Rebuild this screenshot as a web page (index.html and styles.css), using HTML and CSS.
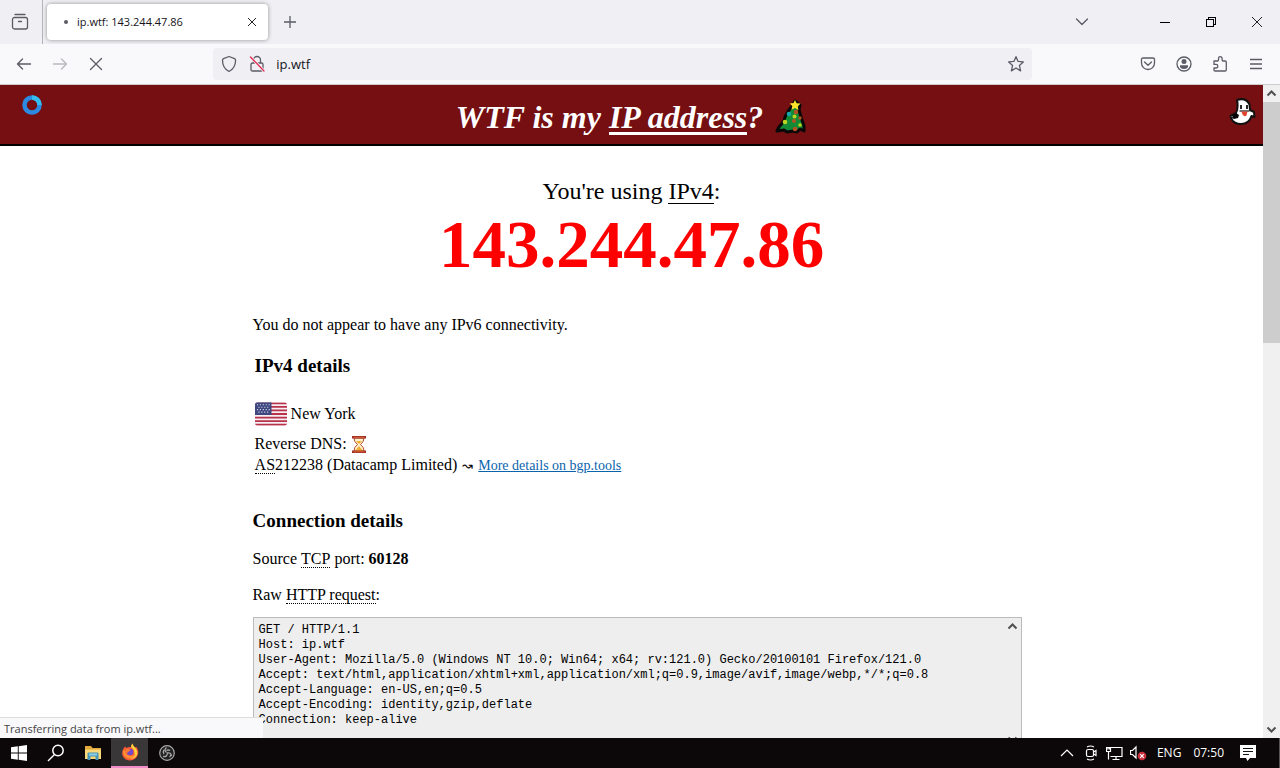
FILE: index.html
```html
<!DOCTYPE html>
<html lang="en">
<head>
<meta charset="utf-8">
<title>ip.wtf: 143.244.47.86</title>
<link rel="stylesheet" href="styles.css">
</head>
<body class="desktop">
<div class="tabstrip">
  <button class="view-btn" aria-label="Firefox View"><svg width="18" height="18" viewBox="0 0 18 18" class="line"><path d="M4 1.500h10M3.500 4.500h11a2 2 0 0 1 2 2v7.500a2 2 0 0 1-2 2h-11a2 2 0 0 1-2-2V6.500a2 2 0 0 1 2-2zM7.500 8.500h3" /></svg></button>
  <div class="tab">
    <span class="tab-dot"></span>
    <span class="tab-title">ip.wtf: 143.244.47.86</span>
    <button class="icon-btn" aria-label="Close tab"><svg width="10" height="10" viewBox="0 0 10 10" class="dark"><path d="M1 1l8 8M9 1L1 9"/></svg></button>
  </div>
  <button class="icon-btn new-tab" aria-label="New tab"><svg width="12" height="12" viewBox="0 0 12 12" class="line"><path d="M6 0v12M0 6h12"/></svg></button>
  <div class="window-controls">
    <button class="icon-btn list-tabs" aria-label="List all tabs"><svg width="14" height="8" viewBox="0 0 14 8" class="line"><path d="M1.500 1L7 6.500 12.500 1"/></svg></button>
    <button class="win-btn" aria-label="Minimize"><svg width="10" height="10" viewBox="0 0 10 10" class="crisp"><path d="M0 5.500h10"/></svg></button>
    <button class="win-btn" aria-label="Restore"><svg width="10" height="10" viewBox="0 0 10 10" class="crisp"><path d="M.5 2.500h7v7h-7zM2.500 2.500v-2h7v7h-2"/></svg></button>
    <button class="win-btn" aria-label="Close"><svg width="10" height="10" viewBox="0 0 10 10" class="dark"><path d="M0 0l10 10M10 0L0 10"/></svg></button>
  </div>
</div>
<div class="toolbar">
  <div class="nav">
    <button class="icon-btn" aria-label="Back"><svg width="16" height="14" viewBox="0 0 16 14" class="line"><path d="M14.500 7H1.500M6.500 2L1.500 7l5 5"/></svg></button>
    <button class="icon-btn faded" aria-label="Forward" disabled><svg width="16" height="14" viewBox="0 0 16 14" class="line"><path d="M1.500 7h13M9.500 2l5 5-5 5"/></svg></button>
    <button class="icon-btn" aria-label="Stop"><svg width="14" height="14" viewBox="0 0 14 14" class="line"><path d="M1.500 1.500l11 11M12.500 1.500l-11 11"/></svg></button>
  </div>
  <div class="urlbar">
    <button class="url-icon" aria-label="Tracking protection"><svg width="16" height="18" viewBox="0 0 16 18" class="line"><path d="M8 1.500l5.600 2.200q1 .5 1 1.600C14.500 10.500 12 14.500 8 16.500 4 14.500 1.500 10.500 1.500 5.300q0-1.100 1-1.600z"/></svg></button>
    <button class="url-icon" aria-label="Connection not secure"><svg width="16" height="18" viewBox="0 0 16 18" class="line"><path d="M4.500 8V5a3.500 3.500 0 0 1 7 0v3M3.500 8h9q1.500 0 1.500 1.500v5q0 1.500-1.500 1.500h-9Q2 16 2 14.500v-5Q2 8 3.500 8z"/><path d="M1.500 2l13.500 14" stroke="#f4eff4" stroke-width="3"/><path d="M1.500 2l13.500 14" stroke="#e22850" stroke-width="1.300"/></svg></button>
    <input class="url-text" aria-label="Address" value="ip.wtf">
    <button class="url-icon" aria-label="Bookmark"><svg width="18" height="18" viewBox="0 0 18 18" class="line"><path d="M9 1.700l2.100 4.700 5.200.5-3.900 3.500 1.200 5.500L9 13l-4.600 2.900 1.200-5.500-3.900-3.500 5.200-.5z"/></svg></button>
  </div>
  <div class="actions">
    <button class="icon-btn" aria-label="Pocket"><svg width="16" height="14" viewBox="0 0 16 14" class="line"><path d="M3 1h10q1.500 0 1.500 1.500V6a6.500 6.500 0 0 1-13 0V2.500Q1.500 1 3 1zM4.500 5L8 8.300 11.500 5"/></svg></button>
    <button class="icon-btn" aria-label="Account"><svg width="16" height="16" viewBox="0 0 16 16" class="line"><circle cx="8" cy="8" r="7"/><circle cx="8" cy="5.500" r="2.500" fill="#5b5b66" stroke="none"/><path d="M4 9.200h8q.5 3.800-4 3.800t-4-3.800z" fill="#5b5b66" stroke="none"/></svg></button>
    <button class="icon-btn" aria-label="Extensions"><svg width="16" height="18" viewBox="0 0 16 18" class="line"><path d="M2 6h3.500q1 0 1-1V3.500a1.800 1.800 0 0 1 3.600 0V5q0 1 1 1h2q1.200 0 1.200 1.200v7.600q0 1.200-1.200 1.200H3.200Q2 16 2 14.800V13h2a1.800 1.800 0 0 0 0-3.600H2z"/></svg></button>
    <button class="icon-btn" aria-label="Menu"><svg width="12" height="12" viewBox="0 0 12 12" class="line"><path d="M0 1.500h12M0 6h12M0 10.500h12"/></svg></button>
  </div>
</div>
<div class="viewport">
  <div class="page">
    <header class="banner">
      <h1 class="banner-title">WTF is my <span class="banner-key">IP address</span>?</h1>
      <svg class="tree" width="34" height="38" viewBox="0 0 34 38"><path d="M22 3l5 4-1 5 2 7 3 9v5l-4-2-3 3-4-1-6 1-3-2-7 1 2-4 5-6 1-4 4-7 4-5z" fill="#138a35" stroke="#080808" stroke-width="3" stroke-linejoin="round"/><path d="M22 2l1.600 3.200 4 .3-2.800 2.700.6 3.800-3.400-2-3.500 1.800.8-3.800-2.600-2.500 3.800-.5z" fill="#ffe22c"/><g fill="#b45322"><circle cx="23" cy="14" r="2.200"/><circle cx="21" cy="23" r="2"/><circle cx="27" cy="20" r="1.700"/><circle cx="22" cy="31" r="2.300"/></g><g fill="#b9d522"><circle cx="21.500" cy="18.500" r="2"/><circle cx="12" cy="24" r="2.300"/><circle cx="27" cy="27" r="1.800"/></g><circle cx="16" cy="16" r="2.300" fill="#18a6a6"/></svg>
      <svg class="ghost" width="28" height="30" viewBox="0 0 28 30"><path d="M9.500 6L9 3q9-3 12.500 4.500L22 13l4 2 .5 5-3-1Q21 27 13 27q-7 0-9.500-5l-1-3L8 16q2-3 1.500-10z" fill="#fff" stroke="#111" stroke-width="2" stroke-linejoin="round"/><path d="M5 18l3-2 3 2-1 3-4 1-2-1z" fill="#050505"/><path d="M13 8v4M19 8v4" stroke="#111" stroke-width="1.800"/><path d="M11.500 14h10" stroke="#111" stroke-width="1.200"/><path d="M13.500 14.500h6l-1 4q-2 2-4-1z" fill="#e3442d"/></svg>
    </header>
    <main class="main">
      <div class="address">
        <p class="using">You're using <span class="using-key">IPv4</span>:</p>
        <p class="ip">143.244.47.86</p>
      </div>
      <p class="no-v6">You do not appear to have any IPv6 connectivity.</p>
      <section class="details">
        <h2 class="heading">IPv4 details</h2>
        <p class="place"><svg width="32" height="24" viewBox="0 0 33 24"><clipPath id="flag-shape"><rect width="33" height="24" rx="3"/></clipPath><g clip-path="url(#flag-shape)"><path fill="#f6eef0" d="M0 0h33v24H0z"/><path d="M0 1h33M0 4.670h33M0 8.330h33M0 12h33M0 15.670h33M0 19.330h33M0 23h33" stroke="#b8324b" stroke-width="1.900"/><path fill="#3f4780" d="M0 0h17v13H0z"/><path d="M2 2.500h14M3.500 5h12M2 7.500h14M3.500 10h12" stroke="#d4d6e8" stroke-width="1.200" stroke-dasharray="1.200 1.800"/></g></svg> New York</p>
        <p class="dns">Reverse DNS: <svg width="14" height="17" viewBox="0 0 14 17"><path d="M2 2h10q0 4-3.500 6.500Q12 11 12 15H2q0-4 3.500-6.500Q2 6 2 2z" fill="#fdf3cf" stroke="#b04a25"/><path d="M4 5h6L7 8zM7 10l4 5H3z" fill="#f0ad32"/><path d="M0 0h14v2.500H0zM0 14.500h14V17H0z" fill="#9c2f22"/><path d="M1.500 1.300h11M1.500 15.800h11" stroke="#e96c42" stroke-width=".8"/></svg></p>
        <p class="asn"><abbr>AS</abbr>212238 (Datacamp Limited) <span class="squiggle">↝</span> <a class="link" href="#bgp">More details on bgp.tools</a></p>
      </section>
      <h2 class="heading">Connection details</h2>
      <p class="port">Source <abbr>TCP</abbr> port: <b>60128</b></p>
      <p class="raw">Raw <abbr>HTTP request</abbr>:</p>
      <div class="request">
        <pre class="request-text">GET / HTTP/1.1
Host: ip.wtf
User-Agent: Mozilla/5.0 (Windows NT 10.0; Win64; x64; rv:121.0) Gecko/20100101 Firefox/121.0
Accept: text/html,application/xhtml+xml,application/xml;q=0.9,image/avif,image/webp,*/*;q=0.8
Accept-Language: en-US,en;q=0.5
Accept-Encoding: identity,gzip,deflate
Connection: keep-alive

</pre>
        <div class="request-scroll">
          <svg width="17" height="17" viewBox="0 0 17 17" class="arrow"><path d="M4.500 10.500l4-4 4 4"/></svg>
          <svg width="17" height="17" viewBox="0 0 17 17" class="arrow"><path d="M4.500 6.500l4 4 4-4"/></svg>
        </div>
      </div>
    </main>
    <svg class="busy" width="20" height="20" viewBox="0 0 20 20"><circle cx="10" cy="10" r="7.500" fill="none" stroke="#2c8be0" stroke-width="4.500"/><path d="M10 2.500a7.500 7.500 0 0 1 7.500 7.500" fill="none" stroke="#35bdf0" stroke-width="4.500"/></svg>
    <div class="status">Transferring data from ip.wtf...</div>
  </div>
  <div class="scrollbar">
    <svg width="17" height="17" viewBox="0 0 17 17" class="arrow"><path d="M4.500 10.500l4-4 4 4"/></svg>
    <div class="track"><div class="thumb"></div></div>
    <svg width="17" height="17" viewBox="0 0 17 17" class="arrow"><path d="M4.500 6.500l4 4 4-4"/></svg>
  </div>
</div>
<div class="taskbar">
  <button class="task" aria-label="Start"><svg width="16" height="16" viewBox="0 0 16 16"><path d="M0 2.300L6.800 1.300V7.500H0zM7.700 1.200L16 0v7.500H7.700zM0 8.500h6.800v6.200L0 13.700zM7.700 8.500H16V16l-8.300-1.200z" fill="#fff"/></svg></button>
  <button class="task" aria-label="Search"><svg width="18" height="18" viewBox="0 0 18 18" fill="none" stroke="#fff" stroke-width="1.500"><circle cx="11" cy="6.500" r="5.200"/><path d="M7.500 10.500L1 17"/></svg></button>
  <button class="task" aria-label="File Explorer"><svg width="18" height="16" viewBox="0 0 18 16"><path d="M1 1h6l1.500 2H17v11H1z" fill="#e0a93a"/><path d="M1 4.500h16V14H1z" fill="#fbd775"/><path d="M3.500 15V8.500q0-1 1-1h9q1 0 1 1V15h-3v-3.500h-5V15z" fill="#4795b8"/><path d="M5 8.500h8v2H5z" fill="#8ed0e6"/></svg></button>
  <button class="task active" aria-label="Firefox"><svg width="18" height="18" viewBox="0 0 18 18"><path d="M4 3.500L5.500 5q2-1.500 4.500-1 0-2 1.500-3.500Q12 3 14 4.500l1.500-.5Q18 8 17 11.500 15 17 9 17.500 3 17 1.300 12 .5 7.500 4 3.500z" fill="#ff5a36"/><path d="M11.500.5Q12 3 14.500 5q3 4 1 8-2.500 3.500-6.500 3 5-2 4.500-6T10 4q0-2 1.500-3.500z" fill="#ffd43b"/><path d="M2 8q0 7 7 7.500 5-.5 5.500-5-3 3.500-7 2Q4 11 4 7z" fill="#ff9330"/><circle cx="9" cy="9" r="3.300" fill="#7548c8"/><path d="M4.500 6.500Q7 5 9.500 7L8 8.500q-2 0-1.500 2-2.500-1-2-4z" fill="#ff7a33"/></svg></button>
  <button class="task" aria-label="OBS Studio"><svg width="16" height="16" viewBox="0 0 16 16" fill="none" stroke="#a9a9a9"><circle cx="8" cy="8" r="7.300" fill="#222" stroke-width="1.200"/><path d="M7.500 2.500q-3 2.500 0 5M12.500 11q-.5-4-4.500-3M4 11.500q4 1 4.500-3.500M5 5q-1.500 2 0 4M11 5.500q-2-1-3.500 0M10.500 12q1.500-1 1-2.500" stroke-width="1.300"/></svg></button>
  <div class="tray">
    <button class="tray-btn" aria-label="Show hidden icons"><svg width="14" height="8" viewBox="0 0 14 8" class="light"><path d="M1 7l6-6 6 6"/></svg></button>
    <button class="tray-btn" aria-label="Meet Now"><svg width="12" height="16" viewBox="0 0 12 16" class="light"><rect x="1.500" y="4.500" width="7" height="7" rx="1.500"/><path d="M8.500 7l2.500-1.500v5L8.500 9M2 2q3.500-2 7 0M2 14q3.500 2 7 0"/></svg></button>
    <button class="tray-btn" aria-label="Network"><svg width="17" height="15" viewBox="0 0 17 15" class="light"><path d="M5 1.500h11v9H4.500M.5 1.500h4v4h-4zM2.500 5.500v8M10 10.500v3M6.500 13.500h7M2 1.500v2M3.500 1.500v2"/></svg></button>
    <button class="tray-btn" aria-label="Volume muted"><svg width="17" height="16" viewBox="0 0 17 16" class="light"><path d="M.5 5.500h2L6 2v11L2.500 9.500h-2z"/><circle cx="12" cy="11" r="4.300" fill="#c8303c" stroke="none"/><path d="M10.200 9.200l3.600 3.600M13.800 9.200l-3.600 3.600"/></svg></button>
    <span class="lang">ENG</span>
    <span class="clock">07:50</span>
    <button class="tray-btn" aria-label="Notifications"><svg width="16" height="16" viewBox="0 0 16 16"><path d="M0 0h16v13H10l-2.500 3L6 13H0z" fill="#fff"/><path d="M3 3.500h10M3 6.500h10M3 9.500h6" stroke="#111"/></svg></button>
    <span class="peek"></span>
  </div>
</div>
</body>
</html>
```
FILE: styles.css
```css
* { box-sizing: border-box; }

.desktop {
  margin: 0;
  height: 100vh;
  display: flex;
  flex-direction: column;
  overflow: hidden;
  background: #fff;
  color: #15141a;
  font: 12px/16px "Open Sans", "Noto Sans", sans-serif;
}

button {
  margin: 0;
  padding: 0;
  border: 0;
  background: none;
  display: flex;
  align-items: center;
  justify-content: center;
}

p, h1, h2, pre { margin: 0; }
svg { flex: none; }

.line { fill: none; stroke: #5b5b66; stroke-width: 1.3; stroke-linecap: round; stroke-linejoin: round; }
.dark { fill: none; stroke: #222; stroke-width: 1; }
.crisp { fill: none; stroke: #000; shape-rendering: crispEdges; }
.light { fill: none; stroke: #fff; stroke-width: 1.2; }
.arrow { fill: none; stroke: #505050; stroke-width: 2; }

.tabstrip {
  flex: none;
  height: 44px;
  display: flex;
  align-items: center;
  background: #f0f0f4;
}

.view-btn {
  width: 43px;
  height: 44px;
  padding-right: 2px;
  border-right: 1px solid #b4b4bb;
}

.tab {
  width: 221px;
  height: 36px;
  margin-left: 4px;
  padding: 0 4px 0 17px;
  display: flex;
  align-items: center;
  background: #fff;
  border-radius: 4px;
  box-shadow: 0 0 4px rgba(0, 0, 0, .4);
}

.tab-dot { width: 4px; height: 4px; border-radius: 50%; background: #5b5b66; }
.tab-title { flex: 1; margin-left: 9px; font-size: 11px; }
.icon-btn { width: 24px; height: 24px; }
.new-tab { margin-left: 10px; }
.window-controls { margin-left: auto; display: flex; align-items: center; }
.list-tabs { margin-right: 48px; }
.win-btn { width: 46px; height: 44px; }

.toolbar {
  flex: none;
  height: 41px;
  display: flex;
  align-items: center;
  background: #f9f9fb;
  border-bottom: 1px solid #ccc;
}

.nav { display: flex; gap: 12px; padding-left: 12px; flex: 1 1 0; }
.faded { opacity: .4; }

.urlbar {
  width: 64%;
  height: 32px;
  padding: 0 7px;
  display: flex;
  align-items: center;
  gap: 10px;
  background: #f0f0f4;
  border-radius: 4px;
}

.url-icon { width: 18px; height: 24px; }

.url-text {
  flex: 1;
  min-width: 0;
  padding: 0;
  border: 0;
  outline: 0;
  background: none;
  color: #15141a;
  font: 13px/20px "Open Sans", "Noto Sans", sans-serif;
}

.actions { display: flex; justify-content: flex-end; gap: 12px; padding-right: 12px; flex: 1.17 1 0; }

.viewport { flex: 1; min-height: 0; display: flex; }

.page {
  position: relative;
  flex: 1;
  min-width: 0;
  overflow: hidden;
  background: #fff;
  color: #000;
  font: 16px/20px "Liberation Serif", "Times New Roman", serif;
}

.banner {
  position: relative;
  display: flex;
  justify-content: center;
  align-items: center;
  gap: 10px;
  height: 61px;
  padding-top: 4px;
  background: #750f11;
  border-bottom: 2px solid #000;
}

.banner-title { color: #fff; font-size: 32px; line-height: 38px; font-style: italic; }
.banner-key { border-bottom: 3px solid #fff; display: inline-block; line-height: 29px; }
.ghost { position: absolute; top: 12px; right: 7px; }
.busy { position: absolute; top: 10px; left: 22px; }

.main { margin: 0 20%; }
.address { padding-top: 29px; text-align: center; }
.using { font-size: 24px; line-height: 32px; }
.using-key { border-bottom: 1px solid #000; display: inline-block; line-height: 24px; }
.ip { color: #f00; font-size: 67px; line-height: 74px; font-weight: bold; }
.no-v6 { margin-top: 34px; }
.details { margin: 20px 0 34px; padding-left: 2px; }
.heading { font-size: 19px; line-height: 22px; }
.place { display: flex; align-items: center; gap: 4px; margin-top: 23px; height: 28px; }
.dns { display: flex; align-items: center; gap: 5px; margin-top: 6px; }
.asn { margin-top: 1px; }
.squiggle { margin: 0 1px; font-size: 13px; }
.link { color: #0a64ad; font-size: 14px; }
.port { margin-top: 17px; }
.raw { margin-top: 16px; }
abbr { text-decoration: none; border-bottom: 1px dotted #000; display: inline-block; line-height: 16px; }

.request {
  display: flex;
  width: calc(100% + 12px);
  margin-top: 12px;
  background: #eee;
  border: 1px solid #bbb;
}

.request-text {
  flex: 1;
  min-width: 0;
  padding: 5px;
  overflow: hidden;
  font: 12px/15px "Liberation Mono", monospace;
}

.request-scroll { display: flex; flex-direction: column; justify-content: space-between; }

.status {
  position: absolute;
  left: 0;
  bottom: 0;
  width: 263px;
  height: 21px;
  padding: 3px 4px;
  background: #f9f9fb;
  border-top: 1px solid #ddd;
  color: #444;
  font: 11px/16px "Open Sans", "Noto Sans", sans-serif;
}

.scrollbar { flex: none; width: 17px; display: flex; flex-direction: column; background: #f0f0f0; }
.track { flex: 1; }
.thumb { height: 39%; background: #cdcdcd; }

.taskbar {
  flex: none;
  height: 30px;
  display: flex;
  background: #0c0809;
  color: #fff;
}

.task { width: 37px; height: 30px; }
.active { background: #3a3738; border-bottom: 2px solid #f28cc8; }
.tray { margin-left: auto; display: flex; align-items: center; }
.tray-btn { width: 24px; height: 30px; }
.lang { margin-left: 6px; }
.clock { margin: 0 12px; }
.peek { height: 30px; margin-left: 19px; border-right: 1px solid #555; }
```
